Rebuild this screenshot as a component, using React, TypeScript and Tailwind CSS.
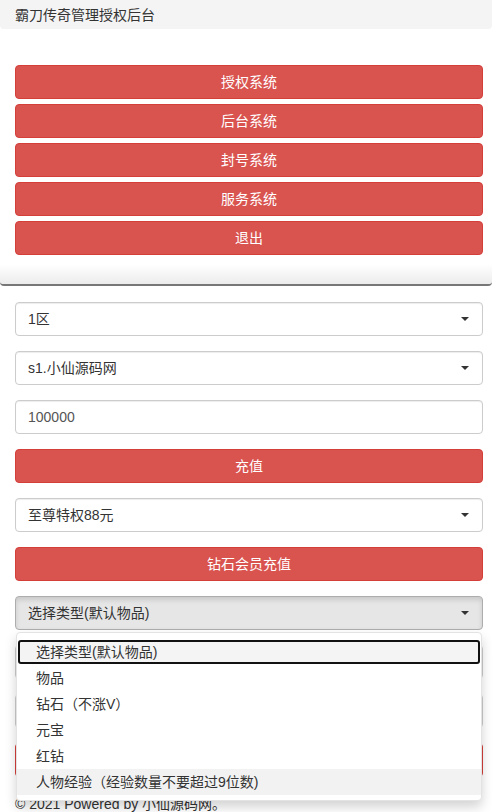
import { useState } from "react"

const menuButtons = ["授权系统", "后台系统", "封号系统", "服务系统", "退出"]

const typeOptions = [
  "选择类型(默认物品)",
  "物品",
  "钻石（不涨V）",
  "元宝",
  "红钻",
  "人物经验（经验数量不要超过9位数)",
]

function Caret() {
  return <span className="ml-auto h-0 w-0 border-x-[4px] border-t-[4px] border-x-transparent border-t-[#333]" />
}

function SelectBox({ label }: { label: string }) {
  return (
    <div className="flex h-[34px] items-center rounded-[4px] border border-[#ccc] bg-white pl-[12px] pr-[13px] text-[#333] shadow-[inset_0_1px_1px_rgba(0,0,0,0.075)]">
      <span>{label}</span>
      <Caret />
    </div>
  )
}

function RedButton({ label }: { label: string }) {
  return (
    <button className="flex h-[34px] w-full items-center justify-center rounded-[4px] border border-[#d43f3a] bg-[#d9534f] text-white">
      {label}
    </button>
  )
}

export default function App() {
  const [hovered] = useState(5)

  return (
    <div
      className="h-screen overflow-hidden bg-white text-[14px] leading-[20px] text-[#333]"
      style={{ fontFamily: '"Liberation Sans", Arial, "Noto Sans CJK SC", sans-serif' }}
    >
      {/* top navigation panel */}
      <div className="rounded-b-[4px] border-b-2 border-[#777] bg-linear-to-b from-white from-[93%] to-[#ececec] pb-[29px]">
        <div className="flex h-[29px] items-center rounded-b-[4px] bg-[#f4f4f4] px-[15px]">霸刀传奇管理授权后台</div>
        <div className="flex flex-col gap-[5px] pl-[15px] pr-[9px] pt-[36px]">
          {menuButtons.map((b) => (
            <RedButton key={b} label={b} />
          ))}
        </div>
      </div>

      {/* form */}
      <div className="flex flex-col gap-[15px] pl-[15px] pr-[9px] pt-[16px]">
        <SelectBox label="1区" />
        <SelectBox label="s1.小仙源码网" />
        <input
          readOnly
          value="100000"
          className="h-[34px] rounded-[4px] border border-[#ccc] px-[12px] text-[#555] shadow-[inset_0_1px_1px_rgba(0,0,0,0.075)] outline-none"
        />
        <RedButton label="充值" />
        <SelectBox label="至尊特权88元" />
        <RedButton label="钻石会员充值" />

        <div className="relative">
          <div className="flex h-[34px] items-center rounded-[4px] border border-[#adadad] bg-[#e6e6e6] pl-[12px] pr-[13px] text-[#333] shadow-[inset_0_3px_5px_rgba(0,0,0,0.125)]">
            <span>选择类型(默认物品)</span>
            <Caret />
          </div>
          <div className="absolute left-[1px] right-[1px] top-full z-10 mt-[2px] rounded-[4px] border border-[#e3e3e3] bg-white pb-[5px] pt-[6px] shadow-[0_6px_12px_rgba(0,0,0,0.175)]">
            {typeOptions.map((o, i) =>
              i === 0 ? (
                <div
                  key={o}
                  className="m-px flex h-[24px] items-center rounded-[3px] border-2 border-[#111] bg-[#f4f4f4] pl-[16px]"
                >
                  {o}
                </div>
              ) : (
                <div
                  key={o}
                  className={`flex h-[26px] items-center pl-[19px] ${i === hovered ? "bg-[#f2f2f2]" : ""}`}
                >
                  {o}
                </div>
              )
            )}
          </div>
        </div>

        <input
          readOnly
          className="h-[34px] rounded-[4px] border border-[#ccc] px-[12px] shadow-[inset_0_1px_1px_rgba(0,0,0,0.075)] outline-none"
        />
        <input
          readOnly
          className="h-[34px] rounded-[4px] border border-[#ccc] px-[12px] shadow-[inset_0_1px_1px_rgba(0,0,0,0.075)] outline-none"
        />
        <RedButton label="提交" />
      </div>

      <div className="px-[15px] pt-[17px]">© 2021 Powered by 小仙源码网。</div>
    </div>
  )
}
